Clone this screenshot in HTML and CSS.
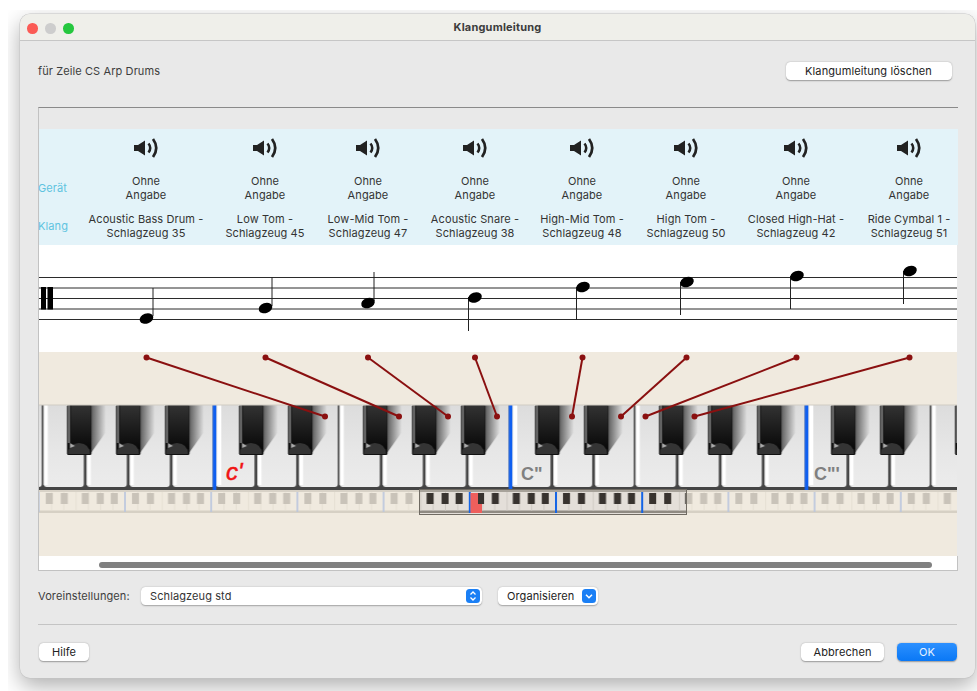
FILE: index.html
```html
<!DOCTYPE html>
<html lang="de">
<head>
<meta charset="utf-8">
<title>Klangumleitung</title>
<link rel="stylesheet" href="styles.css">
</head>
<body>
<svg class="defs" width="0" height="0" aria-hidden="true">
  <defs>
    <symbol id="speaker" viewBox="0 0 25 20">
      <path d="M0 7h4l7-4.5v15L4 13H0z" fill="#222"/>
      <path d="M14.5 5.5q3.5 4.500 0 9" fill="none" stroke="#222" stroke-width="2.500"/>
      <path d="M19 1q6.500 9 0 18" fill="none" stroke="#222" stroke-width="2.700"/>
    </symbol>
    <linearGradient id="ivory" x1="0" y1="0" x2="0" y2="1">
      <stop offset="0" stop-color="#dbdbdb"/>
      <stop offset="0.55" stop-color="#e6e6e6"/>
      <stop offset="1" stop-color="#ececec"/>
    </linearGradient>
    <linearGradient id="ebony" x1="0" y1="0" x2="0" y2="1">
      <stop offset="0" stop-color="#333"/>
      <stop offset="1" stop-color="#080808"/>
    </linearGradient>
    <linearGradient id="castShadow" x1="0" y1="0" x2="1" y2="0">
      <stop offset="0" stop-color="#5c5c5c"/>
      <stop offset="1" stop-color="#5c5c5c" stop-opacity="0"/>
    </linearGradient>
    <g id="blackKey">
      <path d="M24 0h15v27L24 48z" fill="url(#castShadow)"/>
      <rect x="0" y="0" width="24.500" height="50" rx="1.500" fill="#111"/>
      <rect x="1" y="0" width="2" height="38" fill="#777"/>
      <rect x="4" y="0" width="20" height="44" fill="url(#ebony)"/>
      <path d="M1 49q0-10 11-11q11 1 11 11z" fill="#343434"/>
      <path d="M3 38l5 3-5 2z" fill="#aaa"/>
    </g>
    <g id="whiteNarrow"><rect y="-5" width="38.700" height="87" rx="3" fill="url(#ivory)"/></g>
    <g id="whiteWide"><rect y="-5" width="40" height="87" rx="3" fill="url(#ivory)"/></g>

    <!-- one octave of the large keyboard, C sits at x=10 of the tile -->
    <pattern id="octave" patternUnits="userSpaceOnUse" x="204.300" y="405" width="296" height="85">
      <rect width="296" height="85" fill="#454545"/>
      <use href="#whiteNarrow" x="11.500"/>
      <use href="#whiteNarrow" x="53.200"/>
      <use href="#whiteNarrow" x="94.800"/>
      <use href="#whiteWide" x="135.500"/>
      <use href="#whiteWide" x="178.500"/>
      <use href="#whiteWide" x="221.500"/>
      <use href="#whiteWide" x="264.500"/>
      <rect x="0" y="-5" width="8.500" height="87" fill="url(#ivory)"/>
      <rect x="13" width="4" height="80" fill="#fff"/>
      <rect x="53.200" y="50" width="4" height="30" fill="#fff"/>
      <rect x="94.800" y="50" width="4" height="30" fill="#fff"/>
      <rect x="135.500" width="4" height="80" fill="#fff"/>
      <rect x="178.500" y="50" width="4" height="30" fill="#fff"/>
      <rect x="221.500" y="50" width="4" height="30" fill="#fff"/>
      <rect x="264.500" y="50" width="4" height="30" fill="#fff"/>
      <rect x="8.500" width="3.500" height="85" fill="#0f5ff0"/>
      <use href="#blackKey" x="34.700"/>
      <use href="#blackKey" x="83.700"/>
      <use href="#blackKey" x="158.700"/>
      <use href="#blackKey" x="207.700"/>
      <use href="#blackKey" x="256.700"/>
    </pattern>

    <!-- one octave of the overview strip, faded -->
    <pattern id="miniFaded" patternUnits="userSpaceOnUse" x="123" y="490" width="86.200" height="24">
      <rect width="86.200" height="24" fill="#f0eadf"/>
      <rect y="0" width="86.200" height="2" fill="#d8d2c7"/>
      <rect y="20.500" width="86.200" height="2.500" fill="#d6d0c4"/>
      <path d="M14.800 2v18.500M27 2v18.500M39.300 2v18.500M51.600 2v18.500M63.900 2v18.500M76.200 2v18.500" stroke="#e6e0d4" stroke-width="1" fill="none"/>
      <rect x="1.200" y="2" width="1.600" height="20" fill="#b9c5de"/>
      <rect x="9" y="3" width="7" height="11" fill="#c9c3b9"/>
      <rect x="24" y="3" width="7" height="11" fill="#c9c3b9"/>
      <rect x="45" y="3" width="7" height="11" fill="#c9c3b9"/>
      <rect x="60" y="3" width="7" height="11" fill="#c9c3b9"/>
      <rect x="74" y="3" width="7" height="11" fill="#c9c3b9"/>
    </pattern>

    <!-- the same octave at full strength, seen through the viewport frame -->
    <pattern id="miniActive" patternUnits="userSpaceOnUse" x="123" y="490" width="86.200" height="24">
      <rect width="86.200" height="24" fill="#e4dfd9"/>
      <rect y="0" width="86.200" height="2" fill="#a8a39b"/>
      <rect y="20.500" width="86.200" height="2.500" fill="#8f8a82"/>
      <path d="M14.800 2v18.500M27 2v18.500M39.300 2v18.500M51.600 2v18.500M63.900 2v18.500M76.200 2v18.500" stroke="#d0cbc4" stroke-width="1" fill="none"/>
      <rect x="1" y="2" width="2" height="21" fill="#1464e6"/>
      <rect x="9" y="3" width="7" height="11" fill="#38332f"/>
      <rect x="24" y="3" width="7" height="11" fill="#38332f"/>
      <rect x="45" y="3" width="7" height="11" fill="#38332f"/>
      <rect x="60" y="3" width="7" height="11" fill="#38332f"/>
      <rect x="74" y="3" width="7" height="11" fill="#38332f"/>
    </pattern>
  </defs>
</svg>

<div class="stage">
  <main class="window">
    <header class="titlebar">
      <div class="lights">
        <span class="light light-close"></span>
        <span class="light light-min"></span>
        <span class="light light-zoom"></span>
      </div>
      <h1 class="title">Klangumleitung</h1>
    </header>

    <div class="content">
      <div class="toprow">
        <span class="caption">für Zeile CS Arp Drums</span>
        <button class="btn btn-clear">Klangumleitung löschen</button>
      </div>

      <section class="panel">
        <div class="panel-gap"></div>
        <div class="mapping">
          <div class="labels">
            <span class="label label-device">Gerät</span>
            <span class="label label-sound">Klang</span>
          </div>
          <div class="slot">
            <svg class="speaker"><use href="#speaker"/></svg>
            <p class="device">Ohne<br>Angabe</p>
            <p class="sound">Acoustic Bass Drum -<br>Schlagzeug 35</p>
          </div>
          <div class="slot">
            <svg class="speaker"><use href="#speaker"/></svg>
            <p class="device">Ohne<br>Angabe</p>
            <p class="sound">Low Tom -<br>Schlagzeug 45</p>
          </div>
          <div class="slot">
            <svg class="speaker"><use href="#speaker"/></svg>
            <p class="device">Ohne<br>Angabe</p>
            <p class="sound">Low-Mid Tom -<br>Schlagzeug 47</p>
          </div>
          <div class="slot">
            <svg class="speaker"><use href="#speaker"/></svg>
            <p class="device">Ohne<br>Angabe</p>
            <p class="sound">Acoustic Snare -<br>Schlagzeug 38</p>
          </div>
          <div class="slot">
            <svg class="speaker"><use href="#speaker"/></svg>
            <p class="device">Ohne<br>Angabe</p>
            <p class="sound">High-Mid Tom -<br>Schlagzeug 48</p>
          </div>
          <div class="slot">
            <svg class="speaker"><use href="#speaker"/></svg>
            <p class="device">Ohne<br>Angabe</p>
            <p class="sound">High Tom -<br>Schlagzeug 50</p>
          </div>
          <div class="slot">
            <svg class="speaker"><use href="#speaker"/></svg>
            <p class="device">Ohne<br>Angabe</p>
            <p class="sound">Closed High-Hat -<br>Schlagzeug 42</p>
          </div>
          <div class="slot">
            <svg class="speaker"><use href="#speaker"/></svg>
            <p class="device">Ohne<br>Angabe</p>
            <p class="sound">Ride Cymbal 1 -<br>Schlagzeug 51</p>
          </div>
        </div>

        <!-- staff, routing lines and keyboards share one drawing; viewBox uses window coordinates -->
        <svg class="score" viewBox="39 245 918 311" width="918" height="311">
          <rect x="39" y="245" width="918" height="107" fill="#fff"/>
          <rect x="39" y="352" width="918" height="204" fill="#f0eadf"/>

          <g class="staff">
            <path d="M39 277.500H957"/>
            <path d="M39 288H957"/>
            <path d="M39 298.500H957"/>
            <path d="M39 309H957"/>
            <path d="M39 319.500H957"/>
            <rect x="41" y="287" width="5" height="22.500" fill="#000"/>
            <rect x="47.500" y="287" width="5.500" height="22.500" fill="#000"/>
          </g>

          <g class="notes">
            <path class="stem" d="M153 288V316"/><ellipse cx="146.500" cy="318.500" rx="7" ry="5" transform="rotate(-20 146.500 318.500)"/>
            <path class="stem" d="M272 277V306"/><ellipse cx="265.500" cy="308" rx="7" ry="5" transform="rotate(-20 265.500 308)"/>
            <path class="stem" d="M374 272V301"/><ellipse cx="368" cy="303" rx="7" ry="5" transform="rotate(-20 368 303)"/>
            <path class="stem" d="M468.500 297V331"/><ellipse cx="475" cy="297.500" rx="7" ry="5" transform="rotate(-20 475 297.500)"/>
            <path class="stem" d="M576.500 287V320"/><ellipse cx="583" cy="287" rx="7" ry="5" transform="rotate(-20 583 287)"/>
            <path class="stem" d="M680.500 282V315"/><ellipse cx="687" cy="282" rx="7" ry="5" transform="rotate(-20 687 282)"/>
            <path class="stem" d="M790.500 276V309"/><ellipse cx="797" cy="276" rx="7" ry="5" transform="rotate(-20 797 276)"/>
            <path class="stem" d="M903.500 271V304"/><ellipse cx="910" cy="271" rx="7" ry="5" transform="rotate(-20 910 271)"/>
          </g>

          <rect x="39" y="405" width="918" height="85" fill="url(#octave)"/>
          <rect x="39" y="404.500" width="918" height="1" fill="#cfcbc4"/>
          <text class="octave-name octave-low" x="226" y="480">c'</text>
          <text class="octave-name" x="521" y="480">C"</text>
          <text class="octave-name" x="814" y="480">C"'</text>

          <rect x="39" y="490" width="918" height="24" fill="url(#miniFaded)"/>
          <rect x="419.500" y="489.500" width="267" height="25" fill="url(#miniActive)" stroke="#6f6a62"/>
          <rect x="470.500" y="493" width="11.500" height="20" fill="#ee5f5c"/>
          <rect x="478" y="493" width="6" height="11" fill="#38332f"/>

          <g class="routes">
            <path d="M146.500 357.500L325 416.500"/>
            <path d="M265.500 357.500L399 416.500"/>
            <path d="M368 357.500L448 416.500"/>
            <path d="M475 357.500L497 416.500"/>
            <path d="M582.500 357.500L572 416.500"/>
            <path d="M686.500 357.500L621 416.500"/>
            <path d="M796.500 357.500L645.500 416.500"/>
            <path d="M909.500 357.500L694.500 416.500"/>
          </g>
          <g class="route-ends">
            <circle cx="146.500" cy="357.500" r="3"/><circle cx="325" cy="416.500" r="3"/>
            <circle cx="265.500" cy="357.500" r="3"/><circle cx="399" cy="416.500" r="3"/>
            <circle cx="368" cy="357.500" r="3"/><circle cx="448" cy="416.500" r="3"/>
            <circle cx="475" cy="357.500" r="3"/><circle cx="497" cy="416.500" r="3"/>
            <circle cx="582.500" cy="357.500" r="3"/><circle cx="572" cy="416.500" r="3"/>
            <circle cx="686.500" cy="357.500" r="3"/><circle cx="621" cy="416.500" r="3"/>
            <circle cx="796.500" cy="357.500" r="3"/><circle cx="645.500" cy="416.500" r="3"/>
            <circle cx="909.500" cy="357.500" r="3"/><circle cx="694.500" cy="416.500" r="3"/>
          </g>
        </svg>

        <div class="scrollarea"><div class="thumb"></div></div>
      </section>

      <div class="presets">
        <span class="presets-label">Voreinstellungen:</span>
        <div class="select select-preset">
          <span>Schlagzeug std</span>
          <span class="stepper">
            <svg viewBox="0 0 14 14" width="14" height="14"><path d="M4.500 5.500L7 3l2.500 2.500M4.500 8.500L7 11l2.500-2.500" fill="none" stroke="#fff" stroke-width="1.300"/></svg>
          </span>
        </div>
        <div class="select select-organize">
          <span class="select-strong">Organisieren</span>
          <span class="stepper">
            <svg viewBox="0 0 14 14" width="14" height="14"><path d="M4 5.800L7 8.800l3-3" fill="none" stroke="#fff" stroke-width="1.500"/></svg>
          </span>
        </div>
      </div>

      <hr class="divider">

      <footer class="footer">
        <button class="btn btn-help">Hilfe</button>
        <div class="footer-actions">
          <button class="btn btn-cancel">Abbrechen</button>
          <button class="btn btn-ok">OK</button>
        </div>
      </footer>
    </div>
  </main>
</div>
</body>
</html>
```

FILE: styles.css
```css
* { box-sizing: border-box; }

html, body {
  margin: 0;
  height: 100%;
  background: #fff;
  overflow: hidden;
}

body {
  padding: 10px 0 0 8px;
  font-family: Inter, "Liberation Sans", sans-serif;
  font-size: 11px;
  letter-spacing: 0.1px;
  color: #333;
}

.defs { position: absolute; }

/* shadow of the sheet is cut off where the capture ends */
.stage {
  height: 100%;
  overflow: hidden;
  padding: 4px 0 0 12px;
}

.window {
  width: 955px;
  height: 664px;
  display: flex;
  flex-direction: column;
  background: #e9e9e9;
  border-radius: 10px;
  box-shadow: 0 0 0 0.5px #c4c4c4, 0 8px 22px rgba(0, 0, 0, 0.32);
  overflow: hidden;
}

.titlebar {
  position: relative;
  height: 27px;
  flex: none;
  display: flex;
  align-items: center;
  justify-content: center;
  background: #efefea;
  border-bottom: 1px solid #c6c6c6;
}

.lights {
  position: absolute;
  left: 7px;
  top: 9px;
  display: flex;
  gap: 7.5px;
}

.light {
  width: 10.500px;
  height: 10.500px;
  border-radius: 50%;
}
.light-close { background: #fb5b55; }
.light-min { background: #cdcdcd; }
.light-zoom { background: #25c73f; }

.title {
  margin: 0;
  font-size: 11px;
  font-weight: 700;
  letter-spacing: 0.2px;
  color: #3c3c3c;
}

.content {
  flex: 1;
  display: flex;
  flex-direction: column;
  padding: 21px 17px 0 18px;
}

.toprow {
  display: flex;
  align-items: center;
  justify-content: space-between;
  height: 18px;
  padding-right: 6.500px;
}

.caption { font-size: 11px; color: #3d3d3d; }

.btn {
  height: 18px;
  padding: 0;
  border: 0;
  border-radius: 4.500px;
  background: #fff;
  font: inherit;
  letter-spacing: inherit;
  color: #222;
  box-shadow: 0 0.5px 1.500px rgba(0, 0, 0, 0.35);
}

.btn-clear { width: 166px; }
.btn-help { width: 50px; margin-left: 1px; }
.btn-cancel { width: 83px; }
.btn-ok {
  width: 60px;
  background: linear-gradient(#2c90ff, #0a78f5);
  color: #e6f1ff;
}

.panel {
  margin-top: 27px;
  height: 464px;
  display: flex;
  flex-direction: column;
  border: 1px solid #c2c2c2;
  border-top-color: #8a8a8a;
  border-right: 0;
  position: relative;
}

.panel-gap { height: 21px; flex: none; }

.mapping {
  height: 116px;
  flex: none;
  display: grid;
  grid-template-columns: 32px 150px 88px 118px 96px 118px 90px 130px 96px;
  background: #e3f3f9;
}

.labels { position: relative; }

.label {
  position: absolute;
  left: -1px;
  color: #5fc3e0;
  line-height: 14px;
}
.label-device { top: 52px; }
.label-sound { top: 90px; }

.slot {
  display: flex;
  flex-direction: column;
  align-items: center;
  text-align: center;
  padding-top: 9px;
  line-height: 14px;
}

.speaker { width: 25px; height: 20px; flex: none; display: block; margin-left: 1px; }

.device { margin: 16px 0 0; }
.sound { margin: 10px 0 0; white-space: nowrap; }

.score { display: block; flex: none; }

.staff path { stroke: #2b2b2b; stroke-width: 1; fill: none; }

.notes ellipse { fill: #000; }
.stem { stroke: #222; stroke-width: 1; fill: none; }

.routes path { stroke: #8a1010; stroke-width: 2; fill: none; }
.route-ends circle { fill: #8a1010; }

.octave-name {
  font-family: "Liberation Sans", sans-serif;
  font-size: 18px;
  font-weight: 700;
  fill: #808080;
  letter-spacing: 0;
}
.octave-low {
  font-size: 24px;
  font-style: italic;
  font-weight: 400;
  fill: #f01414;
  stroke: #f01414;
  stroke-width: 0.5px;
}

.scrollarea {
  flex: 1;
  background: #fff;
  padding: 6px 25px 0 60px;
  border-right: 1px solid #c2c2c2;
}

.thumb {
  height: 6px;
  border-radius: 3px;
  background: #808080;
}

.presets {
  margin-top: 16px;
  height: 18px;
  display: flex;
  align-items: center;
}

.presets-label { width: 103px; color: #3d3d3d; }

.select {
  height: 18px;
  display: flex;
  align-items: center;
  justify-content: space-between;
  border-radius: 4.500px;
  background: #fff;
  box-shadow: 0 0.5px 1.500px rgba(0, 0, 0, 0.3);
  padding: 0 2px 0 9px;
  color: #333;
}

.select-preset { width: 341px; }
.select-organize { width: 100px; margin-left: 16px; }
.select-strong { color: #222; }

.stepper {
  width: 14px;
  height: 14px;
  border-radius: 3.500px;
  background: #1a7ff5;
  display: block;
}
.stepper svg { display: block; }

.divider {
  margin: 19px 1px 0 0;
  height: 1px;
  border: 0;
  background: #c4c4c4;
}

.footer {
  margin-top: 18px;
  padding-right: 1px;
  display: flex;
  justify-content: space-between;
}

.footer-actions { display: flex; gap: 13px; }
```
